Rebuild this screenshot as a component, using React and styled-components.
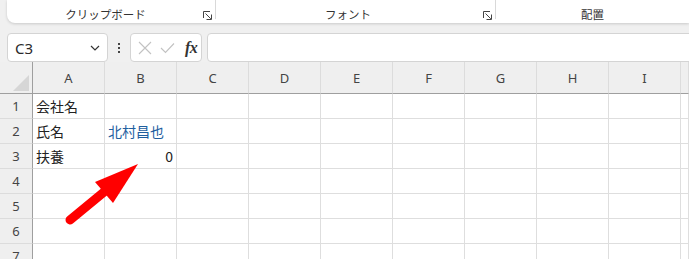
import React from "react";
import styled, { createGlobalStyle } from "styled-components";

const GlobalStyle = createGlobalStyle`
  html, body {
    margin: 0;
    padding: 0;
    background: #f0f0f0;
    font-family: "Noto Sans", "Noto Sans CJK JP", sans-serif;
    overflow: hidden;
  }
`;

const COLS = ["A", "B", "C", "D", "E", "F", "G", "H", "I"];

const ROWS = [
  { n: 1, cells: { A: "会社名" } },
  { n: 2, cells: { A: "氏名", B: "北村昌也" } },
  { n: 3, cells: { A: "扶養", B: "0" } },
  { n: 4, cells: {} },
  { n: 5, cells: {} },
  { n: 6, cells: {} },
  { n: 7, cells: {} },
];

const Page = styled.div`
  position: relative;
  width: 689px;
  height: 259px;
  overflow: hidden;
  background: #f0f0f0;
`;

const Ribbon = styled.div`
  margin-left: 7px;
  height: 23px;
  background: #ffffff;
  border-bottom-left-radius: 8px;
  box-shadow: 0 1px 3px rgba(0, 0, 0, 0.16);
  display: grid;
  grid-template-columns: 209px 280px 1fr;
`;

const Group = styled.div`
  position: relative;
  display: flex;
  align-items: flex-end;
  justify-content: center;
  padding-right: ${(p) => p.$pad || 0}px;
  padding-bottom: 2px;

  &::after {
    content: "";
    display: ${(p) => (p.$sep ? "block" : "none")};
    position: absolute;
    right: 0;
    top: 0;
    width: 1px;
    height: 19px;
    background: #d9d9d9;
  }
`;

const GroupLabel = styled.span`
  font-family: "Noto Sans CJK JP", sans-serif;
  font-size: 11.5px;
  line-height: 14px;
  color: #333333;
`;

const Launcher = styled.svg`
  position: absolute;
  right: 4px;
  bottom: 3px;
`;

const FormulaBar = styled.div`
  display: flex;
  align-items: center;
  height: 29px;
  margin-top: 10px;
  padding-left: 7px;
`;

const Box = styled.div`
  height: 29px;
  box-sizing: border-box;
  background: #ffffff;
  border: 1px solid #d4d4d4;
  border-radius: 4px;
  display: flex;
  align-items: center;
  width: ${(p) => (p.$w ? `${p.$w}px` : "auto")};
  flex: ${(p) => (p.$grow ? "1" : "none")};
  margin-right: ${(p) => p.$mr || 0}px;
`;

const NameText = styled.span`
  font-family: "Noto Sans", sans-serif;
  font-size: 15px;
  color: #2b2b2b;
  padding-left: 7px;
  flex: 1;
`;

const Dots = styled.div`
  width: 22px;
  display: flex;
  flex-direction: column;
  align-items: center;
  gap: 2px;
  span {
    width: 2px;
    height: 2px;
    background: #444;
  }
`;

const Fx = styled.span`
  font-family: "Liberation Serif", serif;
  font-style: italic;
  font-weight: bold;
  font-size: 16px;
  color: #333;
  margin-left: 10px;
  letter-spacing: -0.5px;
`;

const Sheet = styled.div`
  display: grid;
  grid-template-columns: 33px repeat(9, 72px) 1fr;
  grid-template-rows: 32px;
  grid-auto-rows: 25px;
  background: #ffffff;
`;

const Corner = styled.div`
  background: #efefef;
  border-bottom: 1px solid #9f9f9f;
  border-right: 1px solid #9f9f9f;
  box-sizing: border-box;
  display: flex;
  align-items: flex-end;
  justify-content: flex-end;
  padding: 0 3px 2px 0;
`;

const ColHead = styled.div`
  box-sizing: border-box;
  background: #efefef;
  border-bottom: 1px solid #9f9f9f;
  border-right: 1px solid #dcdcdc;
  display: flex;
  align-items: center;
  justify-content: center;
  font-size: 13px;
  color: #444;
`;

const RowHead = styled.div`
  background: #efefef;
  border-right: 1px solid #9f9f9f;
  border-bottom: 1px solid #dcdcdc;
  box-sizing: border-box;
  display: flex;
  align-items: center;
  justify-content: center;
  font-size: 13px;
  color: #444;
`;

const Cell = styled.div`
  box-sizing: border-box;
  border-right: 1px solid #dedede;
  border-bottom: 1px solid #dedede;
  display: flex;
  align-items: center;
  justify-content: ${(p) => (p.$num ? "flex-end" : "flex-start")};
  padding: 0 3px;
  font-family: "Noto Sans CJK JP", sans-serif;
  font-size: 14px;
  color: ${(p) => p.$color || "#222"};
  white-space: nowrap;
`;

const Overlay = styled.svg`
  position: absolute;
  left: 0;
  top: 0;
  pointer-events: none;
`;

function LauncherIcon() {
  return (
    <Launcher width="9" height="9" viewBox="0 0 9 9" fill="none" stroke="#444" strokeWidth="1">
      <path d="M0.5 7 V0.5 H7" />
      <path d="M2.5 2.5 L7.8 7.8" />
      <path d="M3.5 8.5 H8.5 V3.5" />
    </Launcher>
  );
}

export default function App() {
  return (
    <>
      <GlobalStyle />
      <Page>
        <Ribbon>
          <Group $sep $pad={12}>
            <GroupLabel>クリップボード</GroupLabel>
            <LauncherIcon />
          </Group>
          <Group $sep $pad={16}>
            <GroupLabel>フォント</GroupLabel>
            <LauncherIcon />
          </Group>
          <Group $pad={0}>
            <GroupLabel>配置</GroupLabel>
          </Group>
        </Ribbon>

        <FormulaBar>
          <Box $w={101}>
            <NameText>C3</NameText>
            <svg width="10" height="6" viewBox="0 0 10 6" style={{ marginRight: 7 }}>
              <path d="M1 1 L5 5 L9 1" fill="none" stroke="#333" strokeWidth="1.2" />
            </svg>
          </Box>
          <Dots>
            <span />
            <span />
            <span />
          </Dots>
          <Box $w={72} $mr={5}>
            <svg width="14" height="14" viewBox="0 0 14 14" style={{ marginLeft: 7 }}>
              <path d="M1 1 L13 13 M13 1 L1 13" stroke="#c2c2c2" strokeWidth="1.1" />
            </svg>
            <svg width="15" height="12" viewBox="0 0 15 12" style={{ marginLeft: 8 }}>
              <path d="M1 6 L5.5 10.5 L14 1.5" fill="none" stroke="#c2c2c2" strokeWidth="1.1" />
            </svg>
            <Fx>fx</Fx>
          </Box>
          <Box $grow style={{ marginRight: -10 }} />
        </FormulaBar>

        <Sheet>
          <Corner>
            <svg width="16" height="16" viewBox="0 0 16 16">
              <path d="M16 0 L16 16 L0 16 Z" fill="#d6d6d6" />
            </svg>
          </Corner>
          {COLS.map((c) => (
            <ColHead key={c}>{c}</ColHead>
          ))}
          <ColHead />
          {ROWS.map((r) => (
            <React.Fragment key={r.n}>
              <RowHead>{r.n}</RowHead>
              {COLS.map((c) => {
                const v = r.cells[c];
                const num = v !== undefined && /^\d+$/.test(v);
                return (
                  <Cell key={c} $num={num} $color={r.n === 2 && c === "B" ? "#1f5f9f" : undefined}>
                    {v}
                  </Cell>
                );
              })}
              <Cell />
            </React.Fragment>
          ))}
        </Sheet>

        <Overlay width="689" height="259" viewBox="0 0 689 259">
          <line x1="70" y1="220" x2="104" y2="192" stroke="#ff0000" strokeWidth="9" strokeLinecap="round" />
          <polygon points="138,164 95,182 113,203" fill="#ff0000" />
        </Overlay>
      </Page>
    </>
  );
}
